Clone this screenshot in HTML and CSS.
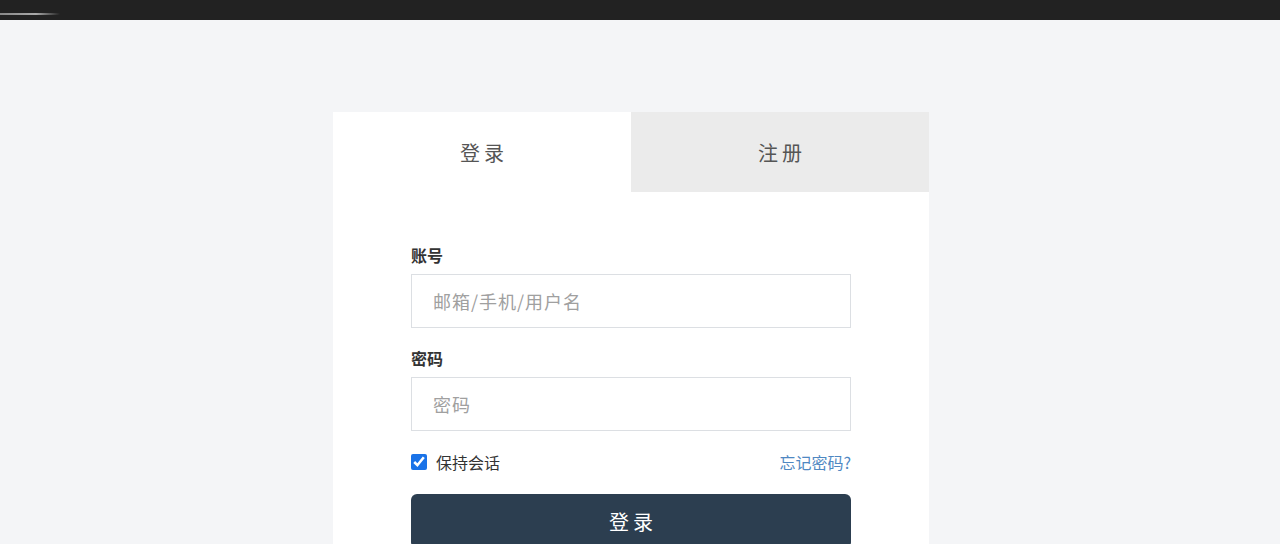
FILE: index.html
```html
<!DOCTYPE html>
<html lang="zh">
<head>
<meta charset="utf-8">
<title>登录</title>
<link rel="stylesheet" href="styles.css">
</head>
<body>
<header class="topbar"><span class="topbar-mark"></span></header>
<main class="page">
  <section class="card">
    <nav class="tabs">
      <div class="tab tab-active">登录</div>
      <div class="tab">注册</div>
    </nav>
    <form class="form">
      <label class="label" for="acc">账号</label>
      <input class="input" id="acc" type="text" placeholder="邮箱/手机/用户名">
      <label class="label label-second" for="pwd">密码</label>
      <input class="input" id="pwd" type="password" placeholder="密码">
      <div class="row">
        <label class="keep"><input class="check" type="checkbox" checked><span>保持会话</span></label>
        <a class="forgot" href="#">忘记密码?</a>
      </div>
      <button class="submit" type="button">登录</button>
    </form>
  </section>
</main>
</body>
</html>
```
FILE: styles.css
```css
* { box-sizing: border-box; }
html, body { margin: 0; padding: 0; }
body {
  background: #f4f5f7;
  font-family: "Noto Sans CJK SC", "Noto Sans", sans-serif;
  color: #333;
  height: 544px;
  overflow: hidden;
}
.topbar {
  height: 20px;
  background: #222222;
  position: relative;
}
.topbar-mark {
  position: absolute;
  left: 0;
  top: 13px;
  width: 60px;
  height: 2px;
  background: linear-gradient(90deg, #888 0%, #aaa 60%, rgba(34,34,34,0) 100%);
}
.page {
  display: flex;
  justify-content: center;
  padding: 92px 18px 0 0;
  height: 524px;
  overflow: hidden;
}
.card {
  width: 596px;
  background: #fff;
}
.tabs {
  display: flex;
  height: 80px;
}
.tab {
  flex: 1;
  display: flex;
  align-items: center;
  justify-content: center;
  font-size: 20px;
  letter-spacing: 4px;
  text-indent: 4px;
  color: #555;
  background: #ebebeb;
}
.tab-active { background: #fff; }
.form {
  display: flex;
  flex-direction: column;
  padding: 51px 78px 0;
}
.label {
  font-size: 16px;
  font-weight: 700;
  line-height: 24px;
  color: #333;
  margin-bottom: 7px;
}
.label-second { margin-top: 18px; }
.input {
  height: 54px;
  flex: none;
  border: 1px solid #dcdfe3;
  padding: 0 21px;
  font-family: inherit;
  font-size: 18px;
  letter-spacing: 1px;
  color: #333;
  outline: none;
}
.input::placeholder { color: #a0a0a0; }
.row {
  display: flex;
  justify-content: space-between;
  align-items: center;
  margin-top: 19px;
  height: 24px;
  flex: none;
}
.keep {
  display: flex;
  align-items: center;
  gap: 9px;
  font-size: 16px;
  color: #333;
}
.check {
  margin: 0;
  width: 16px;
  height: 16px;
  accent-color: #1a73e8;
}
.forgot {
  font-size: 16px;
  color: #4f88c2;
  text-decoration: none;
}
.submit {
  margin-top: 20px;
  height: 54px;
  flex: none;
  border: none;
  border-radius: 6px;
  background: #2c3e50;
  color: #fff;
  font-family: inherit;
  font-size: 20px;
  letter-spacing: 4px;
  text-indent: 4px;
}
```
